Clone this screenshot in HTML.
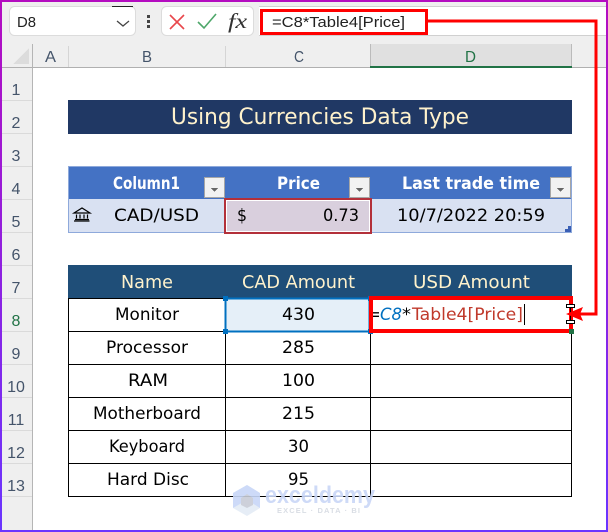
<!DOCTYPE html>
<html><head><meta charset="utf-8"><style>
html,body{margin:0;padding:0;background:#fff}
svg{display:block}
text{font-family:"DejaVu Sans","Liberation Sans",sans-serif;fill:#000;font-size:17px}
.u{font-family:"Liberation Sans",sans-serif}
.hd{font-family:"Liberation Sans",sans-serif;font-size:16px;fill:#44546a}
.big{font-size:17px;font-weight:bold;fill:#fff}
.cr{fill:#fff2cc}
</style></head><body>
<svg width="608" height="532" viewBox="0 0 608 532" xmlns="http://www.w3.org/2000/svg" shape-rendering="crispEdges">
<defs><linearGradient id="g" x1="0" y1="0" x2="0" y2="1"><stop offset="0" stop-color="#b40cc0"/><stop offset="1" stop-color="#6a35ff"/></linearGradient></defs>
<rect width="608" height="532" fill="url(#g)"/>
<rect x="2" y="2" width="604" height="528" fill="#fff"/>
<!-- toolbar -->
<rect x="2" y="2" width="604" height="65" fill="#efefef"/>
<rect x="2" y="68" width="30" height="462" fill="#efefef"/>
<rect x="9.5" y="6.5" width="126" height="29" rx="5" fill="#fff" stroke="#dcdcdc" shape-rendering="auto"/>
<rect x="112" y="6" width="21" height="1" fill="#222"/>
<path d="M117 21l6 5 6-5" fill="none" stroke="#444" stroke-width="1.3" shape-rendering="auto"/>
<text class="u" x="17" y="27" style="font-family:'Liberation Sans',sans-serif;font-size:15px;fill:#222" textLength="19" lengthAdjust="spacingAndGlyphs">D8</text>
<rect x="147" y="15" width="3" height="3" fill="#444"/><rect x="147" y="20" width="3" height="3" fill="#444"/><rect x="147" y="25" width="3" height="3" fill="#444"/>
<rect x="161.5" y="6.5" width="92" height="29" rx="5" fill="#fff" stroke="#dcdcdc" shape-rendering="auto"/>
<path d="M170 15l14 14M184 15l-14 14" stroke="#e8474c" stroke-width="1.6" fill="none" shape-rendering="auto"/>
<path d="M198 22l6 6 12-14" stroke="#4ea76a" stroke-width="1.6" fill="none" shape-rendering="auto"/>
<text x="228" y="28" style="font-family:'Liberation Serif',serif;font-style:italic;font-size:21px;fill:#333" textLength="19" lengthAdjust="spacingAndGlyphs">fx</text>
<rect x="259" y="6" width="347" height="29" fill="#fff"/>
<rect x="259" y="6" width="347" height="1" fill="#d0d0d0"/>
<rect x="259" y="35" width="347" height="1" fill="#d0d0d0"/>
<text x="272" y="27" style="font-family:'Liberation Sans',sans-serif;font-size:15px;fill:#222" textLength="133" lengthAdjust="spacingAndGlyphs">=C8*Table4[Price]</text>
<rect x="261.5" y="10.5" width="165" height="23" fill="none" stroke="#f00" stroke-width="3"/>
<!-- column headers -->
<path d="M29 48v16H13z" fill="#dcdcdc"/>
<rect x="370" y="44" width="201" height="23" fill="#e0e0e0"/>
<rect x="370" y="44" width="1" height="22" fill="#bbb"/><rect x="571" y="44" width="1" height="22" fill="#bbb"/>
<rect x="68" y="46" width="1" height="21" fill="#d5d5d5"/><rect x="225" y="46" width="1" height="21" fill="#d5d5d5"/>
<rect x="2" y="67" width="604" height="1" fill="#b0b0b0"/>
<rect x="32" y="44" width="1" height="486" fill="#b5b5b5"/>
<rect x="370" y="66" width="202" height="2" fill="#217346"/>
<text class="hd" x="45" y="62" textLength="11" lengthAdjust="spacingAndGlyphs">A</text>
<text class="hd" x="142" y="62" textLength="10" lengthAdjust="spacingAndGlyphs">B</text>
<text class="hd" x="294" y="62" textLength="10" lengthAdjust="spacingAndGlyphs">C</text>
<text class="hd" x="465" y="62" style="fill:#217346" textLength="11" lengthAdjust="spacingAndGlyphs">D</text>
<!-- row headers -->
<g fill="#dadada">
<rect x="2" y="100" width="30" height="1"/><rect x="2" y="133" width="30" height="1"/><rect x="2" y="166" width="30" height="1"/><rect x="2" y="199" width="30" height="1"/><rect x="2" y="232" width="30" height="1"/><rect x="2" y="265" width="30" height="1"/><rect x="2" y="298" width="30" height="1"/><rect x="2" y="331" width="30" height="1"/><rect x="2" y="364" width="30" height="1"/><rect x="2" y="397" width="30" height="1"/><rect x="2" y="430" width="30" height="1"/><rect x="2" y="463" width="30" height="1"/><rect x="2" y="496" width="30" height="1"/>
</g>
<g text-anchor="middle">
<text class="hd" x="16" y="95">1</text><text class="hd" x="16" y="128">2</text><text class="hd" x="16" y="161">3</text><text class="hd" x="16" y="194">4</text><text class="hd" x="16" y="227">5</text><text class="hd" x="16" y="260">6</text><text class="hd" x="16" y="293">7</text>
<text class="hd" x="16" y="326" style="fill:#217346">8</text><text class="hd" x="16" y="359">9</text><text class="hd" x="16" y="392">10</text><text class="hd" x="16" y="425">11</text><text class="hd" x="16" y="458">12</text><text class="hd" x="16" y="491">13</text>
</g>
<!-- title -->
<rect x="68" y="100" width="504" height="34" fill="#203864"/>
<text class="cr" x="171" y="124" style="font-size:22px" textLength="298" lengthAdjust="spacingAndGlyphs">Using Currencies Data Type</text>
<!-- table 1 -->
<rect x="68" y="166" width="504" height="33" fill="#4472c4"/>
<rect x="68" y="199" width="504" height="34" fill="#d9e1f2"/>
<rect x="68.5" y="166.5" width="503" height="66" fill="none" stroke="#8ea9db"/>
<text class="big" x="113" y="189" textLength="67" lengthAdjust="spacingAndGlyphs">Column1</text>
<text class="big" x="277" y="189" textLength="43" lengthAdjust="spacingAndGlyphs">Price</text>
<text class="big" x="402" y="189" textLength="138" lengthAdjust="spacingAndGlyphs">Last trade time</text>
<g>
<rect x="204.5" y="177.5" width="20" height="20" fill="#f2f2f2" stroke="#a6a6a6"/><path d="M211 188h7l-3.500 4z" fill="#666"/>
<rect x="349.5" y="177.5" width="20" height="20" fill="#f2f2f2" stroke="#a6a6a6"/><path d="M356 188h7l-3.500 4z" fill="#666"/>
<rect x="550.500" y="177.5" width="20" height="20" fill="#f2f2f2" stroke="#a6a6a6"/><path d="M557 188h7l-3.500 4z" fill="#666"/>
</g>
<path d="M74 213l8-5 8 5zM74 221h15.500M75 219.500h14M76.500 214.500v4M80 214.500v4M84 214.500v4M87.500 214.500v4" fill="none" stroke="#000" stroke-width="1.200" shape-rendering="auto"/>
<text x="114" y="221" textLength="85" lengthAdjust="spacingAndGlyphs">CAD/USD</text>
<rect x="225" y="199" width="146" height="34" fill="#fff" stroke="#b3303a" stroke-width="2"/>
<rect x="227" y="201" width="142" height="30" fill="#d9cfdd"/>
<text x="237" y="221" textLength="10" lengthAdjust="spacingAndGlyphs">$</text>
<text x="323" y="221" textLength="36" lengthAdjust="spacingAndGlyphs">0.73</text>
<text x="397" y="221" textLength="148" lengthAdjust="spacingAndGlyphs">10/7/2022 20:59</text>
<path d="M571 226v6h-6v-3h3v-3z" fill="#3a5fb5"/>
<!-- table 2 -->
<rect x="68" y="265" width="504" height="33" fill="#1f4e78"/>
<text class="cr" x="121" y="288" style="font-size:18px" textLength="52" lengthAdjust="spacingAndGlyphs">Name</text>
<text class="cr" x="242" y="288" style="font-size:18px" textLength="113" lengthAdjust="spacingAndGlyphs">CAD Amount</text>
<text class="cr" x="413" y="288" style="font-size:18px" textLength="117" lengthAdjust="spacingAndGlyphs">USD Amount</text>
<g fill="#000">
<rect x="68" y="298" width="1" height="199"/><rect x="225" y="298" width="1" height="199"/><rect x="370" y="298" width="1" height="199"/><rect x="571" y="298" width="1" height="199"/>
<rect x="68" y="298" width="504" height="1"/><rect x="68" y="331" width="504" height="1"/><rect x="68" y="364" width="504" height="1"/><rect x="68" y="397" width="504" height="1"/><rect x="68" y="430" width="504" height="1"/><rect x="68" y="463" width="504" height="1"/><rect x="68" y="496" width="504" height="1"/>
</g>
<rect x="226" y="299" width="144" height="32" fill="#e5eff8"/>
<text x="115" y="320" textLength="64" lengthAdjust="spacingAndGlyphs">Monitor</text>
<text x="106" y="353" textLength="82" lengthAdjust="spacingAndGlyphs">Processor</text>
<text x="128" y="386" textLength="40" lengthAdjust="spacingAndGlyphs">RAM</text>
<text x="93" y="419" textLength="108" lengthAdjust="spacingAndGlyphs">Motherboard</text>
<text x="109" y="452" textLength="76" lengthAdjust="spacingAndGlyphs">Keyboard</text>
<text x="107" y="485" textLength="82" lengthAdjust="spacingAndGlyphs">Hard Disc</text>
<text x="282" y="320" textLength="33" lengthAdjust="spacingAndGlyphs">430</text>
<text x="282" y="353" textLength="33" lengthAdjust="spacingAndGlyphs">285</text>
<text x="282" y="386" textLength="33" lengthAdjust="spacingAndGlyphs">100</text>
<text x="282" y="419" textLength="33" lengthAdjust="spacingAndGlyphs">215</text>
<text x="288" y="452" textLength="21" lengthAdjust="spacingAndGlyphs">30</text>
<text x="288" y="485" textLength="21" lengthAdjust="spacingAndGlyphs">95</text>
<!-- C8 selection -->
<rect x="225.500" y="298.500" width="144" height="33" fill="none" stroke="#0070c0" stroke-width="2"/>
<rect x="223" y="296" width="5" height="5" fill="#0070c0"/><rect x="223" y="329" width="5" height="5" fill="#0070c0"/><rect x="368" y="329" width="5" height="5" fill="#0070c0"/><rect x="368" y="296" width="5" height="5" fill="#0070c0"/>
<!-- D8 -->
<text x="372" y="320" textLength="8" lengthAdjust="spacingAndGlyphs">=</text>
<text x="380" y="320" style="fill:#0070c0;font-style:italic" textLength="22" lengthAdjust="spacingAndGlyphs">C8</text>
<text x="402" y="320" textLength="9" lengthAdjust="spacingAndGlyphs">*</text>
<text x="412" y="320" style="fill:#c0392b" textLength="111" lengthAdjust="spacingAndGlyphs">Table4[Price]</text>
<rect x="524" y="304" width="1" height="21" fill="#000"/>
<rect x="371" y="298" width="200" height="33" fill="none" stroke="#f00" stroke-width="4"/>
<rect x="569" y="329" width="5" height="5" fill="#217346"/>
<!-- ibeam -->
<path d="M566.500 304.500h8v3h-8zM566.500 320.500h8v3h-8z" fill="#fff" stroke="#000" stroke-width="1"/>
<rect x="570" y="307" width="1" height="14" fill="#000"/>
<!-- arrow -->
<path d="M428 21h168v293H576" fill="none" stroke="#f00" stroke-width="3"/>
<path d="M566 314l17-7-3 7 3 7z" fill="#f00" shape-rendering="auto"/>
<!-- watermark -->
<g shape-rendering="auto" opacity=".9">
<path d="M247 485l13 8v15l-13 8-14-8v-15z" fill="#e4ecf6"/>
<path d="M247 485l13 8v15l-13-8zM233 493l14-8v15l-14 8z" fill="#c8d7f8"/>
<path d="M247 494l6 4v7l-6 3-6-3v-7z" fill="#c8ccd6"/>
<text x="265" y="503" style="font-family:'Liberation Sans',sans-serif;font-weight:bold;font-size:24px;fill:#c9d6f7" textLength="110" lengthAdjust="spacingAndGlyphs">exceldemy</text>
<text x="277" y="513" style="font-family:'Liberation Sans',sans-serif;font-weight:bold;font-size:7.500px;fill:#d5dae2" textLength="83" lengthAdjust="spacing">EXCEL · DATA · BI</text>
</g>
</svg>
</body></html>
